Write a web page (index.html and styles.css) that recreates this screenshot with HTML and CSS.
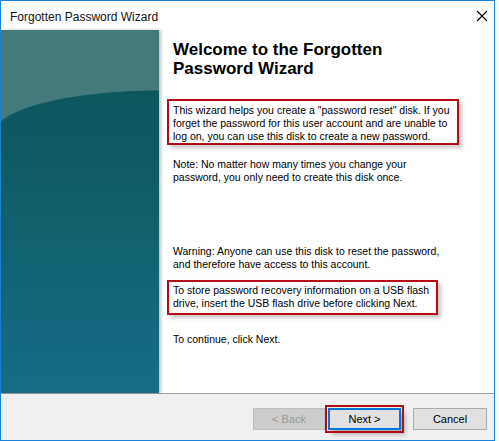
FILE: index.html
```html
<!DOCTYPE html>
<html>
<head>
    <title>Forgotten Password Wizard</title>
    <link rel="stylesheet" href="styles.css">
</head>
<body>
    <div class="window">
        <div class="titlebar">
            <span class="title">Forgotten Password Wizard</span>
            <svg class="close" width="12" height="12" viewBox="0 0 12 12">
                <path d="M1 1 L11 11 M11 1 L1 11" stroke="#000" stroke-width="1.1" fill="none"/>
            </svg>
        </div>
        <div class="main">
            <div class="side"></div>
            <div class="content">
                <h1>Welcome to the Forgotten<br>Password Wizard</h1>
                <p class="boxed first">This wizard helps you create a "password reset" disk. If you<br>forget the password for this user account and are unable to<br>log on, you can use this disk to create a new password.</p>
                <p class="note">Note: No matter how many times you change your<br>password, you only need to create this disk once.</p>
                <p class="warning">Warning: Anyone can use this disk to reset the password,<br>and therefore have access to this account.</p>
                <p class="boxed second">To store password recovery information on a USB flash<br>drive, insert the USB flash drive before clicking Next.</p>
                <p class="continue">To continue, click Next.</p>
            </div>
        </div>
        <div class="footer">
            <button class="btn back" disabled>&lt; Back</button>
            <button class="btn next">Next &gt;</button>
            <button class="btn cancel">Cancel</button>
        </div>
    </div>
</body>
</html>
```

FILE: styles.css
```css
body {
    margin: 0;
    background: #fff;
    font-family: "Liberation Sans", Arial, sans-serif;
}

.window {
    width: 493px;
    height: 439px;
    border: 1px solid #1883d7;
    display: flex;
    flex-direction: column;
    background: #fff;
}

.titlebar {
    height: 29px;
    display: flex;
    align-items: center;
    justify-content: space-between;
    padding: 0 6px 0 9px;
}

.title {
    font-size: 12px;
    color: #111;
    margin-top: 2px;
}

.main {
    height: 363px;
    display: flex;
    border-bottom: 1px solid #a0a0a0;
}

/* teal banner with the lighter glossy cap on top */
.side {
    flex: none;
    width: 158px;
    height: 363px;
    background:
        radial-gradient(168px 43px at 160px 103px, transparent 98%, rgba(70, 125, 125, 0.95) 100%) 0 0 / 158px 103px no-repeat,
        linear-gradient(to bottom, #0c545a 0%, #0e5a61 35%, #136578 70%, #186d84 100%);
    box-shadow: 2px 0 3px rgba(0, 0, 0, 0.25);
}

.content {
    padding-left: 8px;
    font-size: 10.5px;
    line-height: 13px;
    color: #000;
    white-space: nowrap;
}

h1 {
    font-size: 17px;
    line-height: 19px;
    font-weight: bold;
    margin: 10px 0 0 6px;
}

p {
    margin: 0 0 0 6px;
}

.boxed {
    margin-left: 0;
    border: 2px solid #b30d17;
    padding-left: 4px;
    box-shadow: 3px 3px 4px rgba(0, 0, 0, 0.22);
}

.first {
    width: 284px;
    margin-top: 21px;
    padding-top: 3px;
}

.note {
    margin-top: 13px;
}

.warning {
    margin-top: 61px;
}

.second {
    width: 263px;
    margin-top: 9px;
    padding-top: 2px;
    padding-bottom: 3px;
}

.continue {
    margin-top: 18px;
}

.footer {
    flex: 1;
    background: #f0f0f0;
    display: flex;
    justify-content: flex-end;
    align-items: flex-start;
    padding: 14px 7px 0 0;
}

.btn {
    height: 22px;
    font-family: "Liberation Sans", Arial, sans-serif;
    font-size: 11px;
    background: #e1e1e1;
    border: 1px solid #adadad;
    color: #000;
    padding: 0;
}

.back {
    width: 72px;
    background: #cccccc;
    border-color: #bfbfbf;
    color: #9a9a9a;
}

.next {
    width: 73px;
    margin-left: 3px;
    border: 2px solid #0078d7;
    outline: 2px solid #b30d17;
    outline-offset: 1px;
    box-shadow: 4px 4px 5px rgba(0, 0, 0, 0.3);
}

.cancel {
    width: 74px;
    margin-left: 12px;
}
```
